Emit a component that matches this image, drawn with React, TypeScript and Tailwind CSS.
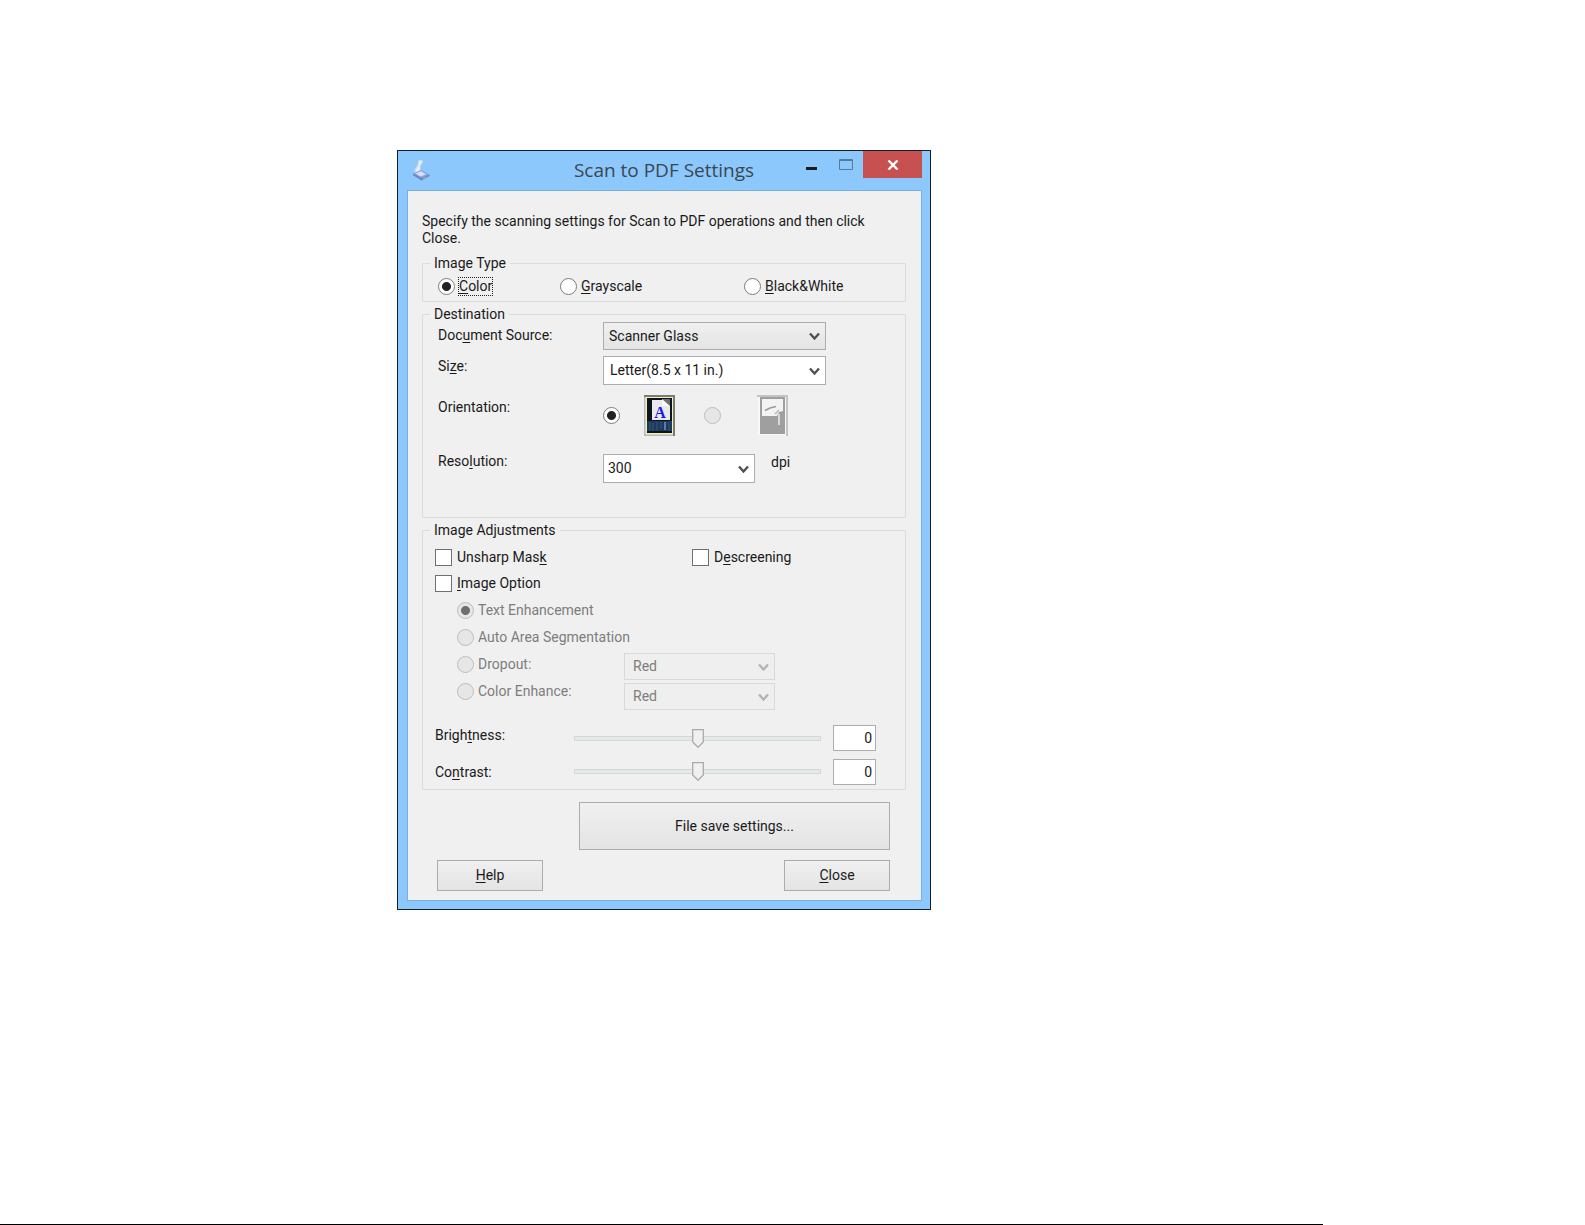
import { useState } from 'react';
import type { ReactNode } from 'react';

const U = ({ children }: { children: ReactNode }) => (
  <span className="underline decoration-1 underline-offset-2">{children}</span>
);

const ScannerIcon = () => (
  <svg width="19" height="22" viewBox="0 0 19 22">
    <path d="M6 1.5 Q8 0 10.5 1.5 L11 3 L8.5 7 L8.5 12 L3 16 Q1 12 3 9 Q6 7 6 1.5 Z" fill="#c3d5f5" />
    <path d="M7 2 L10.5 1.8 L8 7 L8 11 L4.5 14 Q3 11 5 9 Q7 6 7 2 Z" fill="#e6eefc" />
    <path d="M1 14.5 L9 11 L17.5 15.5 L9.5 20.5 Z" fill="#8aa4dd" />
    <path d="M3.5 14.6 L9 12.3 L14 15.2 L8.6 17.6 Z" fill="#d5e0f7" />
    <path d="M1 14.5 L9.5 18.7 L17.5 15.5 L17.5 17 L9.5 21.5 L1 16.2 Z" fill="#6c84c4" />
    <path d="M10.5 18.8 L14 17.2 L14 18.5 L10.5 20.2 Z" fill="#a9a28f" />
  </svg>
);

const PortraitIcon = () => (
  <svg width="31" height="41" viewBox="0 0 31 41">
    <rect width="31" height="41" fill="#b9b9b9" />
    <path d="M0 0 H31 V41 H29 V2 H0 Z" fill="#7b7b78" />
    <rect x="1.5" y="2" width="27.5" height="37.5" fill="#f3f0b8" />
    <rect x="3" y="3" width="25" height="35" fill="#0c1420" />
    <path d="M3 26 H28 V36 H3 Z" fill="#1d3a5c" />
    <path d="M6 27 V35 M9 28 V36 M13 27 V36 M17 27 V34 M25 27 V36" stroke="#35587e" />
    <path d="M21 27 V35" stroke="#5b80a3" strokeWidth="2" />
    <path d="M8 5 H18 L26 11 V25 H8 Z" fill="#e9e9e9" />
    <path d="M18 4 L26 4 V11 H18 Z" fill="#6d6d6d" />
    <path d="M18 4 V11 H26 Z" fill="#fafafa" />
    <text
      x="16"
      y="23"
      textAnchor="middle"
      fontSize="16"
      fontWeight="700"
      fill="#1717f5"
      fontFamily="Liberation Serif, serif"
    >
      A
    </text>
  </svg>
);

const LandscapeIcon = () => (
  <svg width="31" height="41" viewBox="0 0 31 41">
    <path d="M0 0 H31 V41 H29 V2 H0 Z" fill="#c3c3c3" />
    <rect x="1" y="2" width="28" height="38" fill="#f8f8f8" />
    <rect x="3" y="2" width="25" height="37" fill="#9f9f9f" />
    <rect x="5" y="4" width="21" height="17" fill="#f3f3f3" />
    <path d="M26 16 L22 17 L20 21 H26 Z" fill="#9f9f9f" />
    <path d="M8 15.5 L13 13 L19 11.5" stroke="#9a9a9a" strokeWidth="1.6" fill="none" />
    <path d="M18 19 L22 15" stroke="#b5b5b5" strokeWidth="1.4" />
    <path d="M22 19 V30" stroke="#e6e6e6" strokeWidth="1.6" />
  </svg>
);

const radioStyle =
  'size-[17px] shrink-0 appearance-none rounded-full border border-[#7d7d7d] bg-white checked:bg-[radial-gradient(circle,#222_0_4px,#fff_5px)] disabled:border-[#bdbdbd] disabled:bg-[#e6e6e6] disabled:checked:bg-[radial-gradient(circle,#6e6e6e_0_4px,#e6e6e6_5px)]';

interface OptionProps {
  name: string;
  children: ReactNode;
  checked?: boolean;
  disabled?: boolean;
}

const Radio = ({ name, children, checked, disabled }: OptionProps) => (
  <label className={disabled ? 'flex items-center gap-1 text-[#7d7d7d]' : 'flex items-center gap-1'}>
    <input type="radio" name={name} defaultChecked={checked} disabled={disabled} className={radioStyle} />
    <span>{children}</span>
  </label>
);

const Check = ({ name, children }: OptionProps) => (
  <label className="flex items-center gap-[5px]">
    <input
      type="checkbox"
      name={name}
      className="size-[17px] shrink-0 appearance-none border border-[#707070] bg-white checked:bg-[#444]"
    />
    <span>{children}</span>
  </label>
);

interface SelectProps {
  id: string;
  options: string[];
  label?: string;
  box: string;
  disabled?: boolean;
}

const Select = ({ id, options, label, box, disabled }: SelectProps) => (
  <div className="relative">
    <select id={id} aria-label={label} disabled={disabled} className={`w-full appearance-none border pr-7 ${box}`}>
      {options.map((option) => (
        <option key={option}>{option}</option>
      ))}
    </select>
    <svg
      width="11"
      height="9"
      viewBox="0 0 11 9"
      className="pointer-events-none absolute top-1/2 right-[6px] -translate-y-1/2"
    >
      <path d="M1 2 L5.5 7 L10 2" fill="none" stroke={disabled ? '#b4b4b4' : '#505050'} strokeWidth="2.4" />
    </svg>
  </div>
);

interface SliderProps {
  id: string;
  value: number;
  onChange: (value: number) => void;
}

const Slider = ({ id, value, onChange }: SliderProps) => (
  <div className="relative flex h-[19px] items-center">
    <input
      id={id}
      type="range"
      min={-100}
      max={100}
      value={value}
      onChange={(e) => onChange(Number(e.target.value))}
      className="h-[5px] w-full appearance-none border border-[#d3d8d5] bg-[#e5eae7] [&::-webkit-slider-thumb]:h-[19px] [&::-webkit-slider-thumb]:w-3 [&::-webkit-slider-thumb]:appearance-none"
    />
    <svg
      width="12"
      height="19"
      viewBox="0 0 12 19"
      className="pointer-events-none absolute top-0 -translate-x-1/2"
      style={{ left: `${(value + 100) / 2}%` }}
    >
      <path d="M0.7 0.7 H11.3 V13 L6 18.2 L0.7 13 Z" fill="#f0f0f0" stroke="#a9a9a9" strokeWidth="1.3" />
    </svg>
  </div>
);

const groupStyle = 'mt-1 border border-[#dcdcdc]';
const legendStyle = 'ml-[7px] px-1 leading-4';
const buttonStyle = 'border border-[#acacac] bg-linear-to-b from-[#f0f0f0] to-[#e4e4e4]';
const numberStyle = 'h-[26px] w-full border border-[#abadb3] bg-white pr-[3px] text-right';

const TitleBar = () => (
  <header className="grid h-[39px] grid-cols-[1fr_auto_1fr] px-2">
    <div className="pt-2 pl-[6px]">
      <ScannerIcon />
    </div>
    <h1 className="pt-[5px] font-['Open_Sans','Noto_Sans',sans-serif] text-[19px] leading-7 text-[#3b4650]">
      Scan to PDF Settings
    </h1>
    <div className="flex h-[27px] justify-end">
      <button type="button" aria-label="Minimize" className="flex w-9 items-center justify-center pt-2">
        <svg width="11" height="3">
          <rect width="11" height="3" fill="#1b1b1b" />
        </svg>
      </button>
      <button type="button" aria-label="Maximize" className="flex w-[34px] items-center justify-center">
        <svg width="14" height="11" viewBox="0 0 14 11">
          <path d="M0.5 0.5 H13.5 V10.5 H0.5 Z M0 1.5 H14" fill="none" stroke="#587b99" />
        </svg>
      </button>
      <button type="button" aria-label="Close window" className="flex w-[59px] items-center justify-center bg-[#c75050]">
        <svg width="12" height="10" viewBox="0 0 12 10">
          <path d="M1.5 0.5 L10.5 9.5 M10.5 0.5 L1.5 9.5" stroke="#fff" strokeWidth="2.4" />
        </svg>
      </button>
    </div>
  </header>
);

const App = () => {
  const [brightness, setBrightness] = useState(0);
  const [contrast, setContrast] = useState(0);

  return (
    <div className="flex min-h-screen flex-col bg-white font-[Roboto,sans-serif] text-[14px] leading-[17px] text-[#1a1a1a]">
      <main className="m-4 max-w-[534px] border border-[#10202e] bg-[#8cc8fb] lg:mt-[150px] lg:ml-[397px] lg:w-full">
        <TitleBar />
        <form className="mr-2 mb-2 ml-[9px] border border-[#7aaede] bg-[#f0f0f0] pt-[22px] pr-[15px] pb-[9px] pl-[14px]">
          <p className="pr-6">Specify the scanning settings for Scan to PDF operations and then click Close.</p>

          <fieldset className="mt-2 border border-[#dcdcdc]">
            <legend className={legendStyle}>Image Type</legend>
            <div className="grid h-[30px] grid-cols-[122px_184px_1fr] items-center pl-[15px]">
              <Radio name="type" checked>
                <span className="block outline outline-dotted outline-[#222]">
                  <U>C</U>olor
                </span>
              </Radio>
              <Radio name="type">
                <U>G</U>rayscale
              </Radio>
              <Radio name="type">
                <U>B</U>lack&amp;White
              </Radio>
            </div>
          </fieldset>

          <fieldset className={groupStyle}>
            <legend className={legendStyle}>Destination</legend>
            <div className="grid grid-cols-[165px_1fr] pr-[79px] pb-[34px] pl-[15px]">
              <label htmlFor="source" className="pt-[5px]">
                Doc<U>u</U>ment Source:
              </label>
              <Select
                id="source"
                options={['Scanner Glass']}
                box="h-7 border-[#acacac] bg-linear-to-b from-[#f0f0f0] to-[#e4e4e4] pl-[5px]"
              />
              <label htmlFor="size" className="pt-2">
                Si<U>z</U>e:
              </label>
              <div className="pt-[6px]">
                <Select id="size" options={['Letter(8.5 x 11 in.)']} box="h-[29px] border-[#abadb3] bg-white pl-[6px]" />
              </div>
              <span className="pt-[14px]">Orientation:</span>
              <div className="flex items-center pt-[10px]">
                <label className="flex w-[101px] items-center gap-6">
                  <input type="radio" name="orientation" aria-label="Portrait" defaultChecked className={radioStyle} />
                  <PortraitIcon />
                </label>
                <label className="flex items-center gap-9">
                  <input type="radio" name="orientation" aria-label="Landscape" disabled className={radioStyle} />
                  <LandscapeIcon />
                </label>
              </div>
              <label htmlFor="resolution" className="pt-[17px]">
                Reso<U>l</U>ution:
              </label>
              <div className="grid grid-cols-[152px_1fr] gap-4 pt-[18px]">
                <Select id="resolution" options={['300']} box="h-[29px] border-[#abadb3] bg-white pl-1" />
                <span>dpi</span>
              </div>
            </div>
          </fieldset>

          <fieldset className={groupStyle}>
            <legend className={legendStyle}>Image Adjustments</legend>
            <div className="pt-[6px] pb-1 pl-3">
              <div className="grid auto-rows-[26px] grid-cols-[257px_1fr] items-center">
                <Check name="unsharp">
                  Unsharp Mas<U>k</U>
                </Check>
                <Check name="descreening">
                  D<U>e</U>screening
                </Check>
                <Check name="option">
                  <U>I</U>mage Option
                </Check>
              </div>
              <div className="grid grid-cols-[167px_151px] pt-px pl-[22px]">
                <div className="grid auto-rows-[27px] items-center whitespace-nowrap">
                  <Radio name="option" disabled checked>
                    Text Enhancement
                  </Radio>
                  <Radio name="option" disabled>
                    Auto Area Segmentation
                  </Radio>
                  <Radio name="option" disabled>
                    Dropout:
                  </Radio>
                  <Radio name="option" disabled>
                    Color Enhance:
                  </Radio>
                </div>
                <div className="grid content-start gap-[3px] pt-14">
                  <Select
                    id="dropout"
                    label="Dropout color"
                    options={['Red']}
                    disabled
                    box="h-[27px] border-[#d9d9d9] bg-[#efefef] pl-2 text-[#7d7d7d] opacity-100"
                  />
                  <Select
                    id="enhance"
                    label="Enhance color"
                    options={['Red']}
                    disabled
                    box="h-[27px] border-[#d9d9d9] bg-[#efefef] pl-2 text-[#7d7d7d] opacity-100"
                  />
                </div>
              </div>
              <div className="grid grid-cols-[139px_1fr_43px] pt-[15px] pr-[29px]">
                <div className="grid content-start gap-5 pt-[2px]">
                  <label htmlFor="brightness">
                    Brigh<U>t</U>ness:
                  </label>
                  <label htmlFor="contrast">
                    Co<U>n</U>trast:
                  </label>
                </div>
                <div className="grid content-start gap-[14px] pt-1 pr-3">
                  <Slider id="brightness" value={brightness} onChange={setBrightness} />
                  <Slider id="contrast" value={contrast} onChange={setContrast} />
                </div>
                <div className="grid gap-2">
                  <input
                    type="text"
                    aria-label="Brightness value"
                    value={brightness}
                    onChange={(e) => setBrightness(Number(e.target.value) || 0)}
                    className={numberStyle}
                  />
                  <input
                    type="text"
                    aria-label="Contrast value"
                    value={contrast}
                    onChange={(e) => setContrast(Number(e.target.value) || 0)}
                    className={numberStyle}
                  />
                </div>
              </div>
            </div>
          </fieldset>

          <div className="flex flex-wrap justify-between gap-y-[10px] pt-3 pr-4 pl-[15px]">
            <button type="button" className={`ml-auto h-12 w-[311px] ${buttonStyle}`}>
              File save settings...
            </button>
            <div className="flex w-full justify-between">
              <button type="button" className={`h-[31px] w-[106px] ${buttonStyle}`}>
                <U>H</U>elp
              </button>
              <button type="button" className={`h-[31px] w-[106px] ${buttonStyle}`}>
                <U>C</U>lose
              </button>
            </div>
          </div>
        </form>
      </main>
      <hr className="mt-auto mr-[262px] border-black" />
    </div>
  );
};

export default App;
